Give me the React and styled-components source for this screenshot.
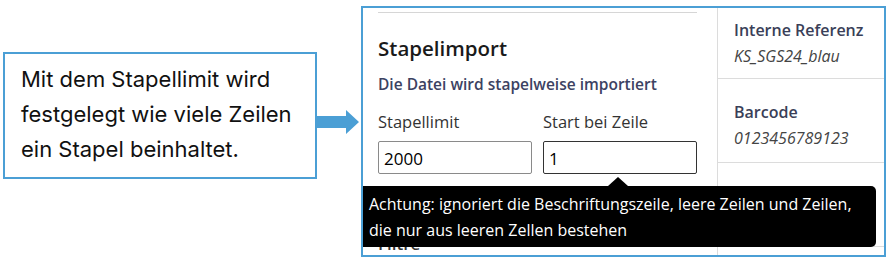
import React from "react"
import styled, { createGlobalStyle } from "styled-components"

const Global = createGlobalStyle`
  html, body {
    margin: 0;
    padding: 0;
    background: #fff;
  }
  body {
    font-family: "Open Sans", "Noto Sans", sans-serif;
  }
`

const accent = "#4b9fd5"

const Page = styled.div`
  display: flex;
  align-items: flex-start;
  width: 889px;
  height: 261px;
  padding: 6px 0 0 3px;
  box-sizing: border-box;
`

const Callout = styled.div`
  margin-top: 46px;
  width: 314px;
  height: 127px;
  box-sizing: border-box;
  border: 2px solid ${accent};
  padding: 8px 0 0 16px;
  font-family: "Inter", "Lato", sans-serif;
  font-size: 22px;
  line-height: 35px;
  color: #111;
  white-space: nowrap;
`

const Arrow = styled.svg`
  margin-top: 104px;
  flex-shrink: 0;
`

const Panel = styled.div`
  position: relative;
  margin-left: 2px;
  width: 525px;
  height: 251px;
  box-sizing: border-box;
  border: 2px solid ${accent};
  overflow: hidden;
  display: grid;
  grid-template-columns: 355px 1fr;
`

const Main = styled.div`
  padding: 4px 20px 0 15px;
  border-right: 1px solid #dcdcdc;
`

const Rule = styled.hr`
  margin: 0;
  border: 0;
  border-top: 1px solid #d6d6d6;
`

const Title = styled.h2`
  margin: 21px 0 0;
  font-size: 20.5px;
  font-weight: 600;
  line-height: 28px;
  color: #1a1a1a;
`

const Subtitle = styled.p`
  margin: 11px 0 0;
  font-size: 15.5px;
  font-weight: 600;
  line-height: 22px;
  color: #3c4262;
`

const Fields = styled.div`
  display: grid;
  grid-template-columns: 154px 154px;
  column-gap: 11px;
  margin-top: 16px;
`

const Field = styled.label`
  display: flex;
  flex-direction: column;
  gap: 8px;
`

const Label = styled.span`
  font-size: 16.5px;
  line-height: 22px;
  color: #333;
`

const Input = styled.input`
  box-sizing: border-box;
  width: 154px;
  height: 33px;
  padding: 2px 5px 0;
  border: 1px solid ${p => (p.$focused ? "#333" : "#8a8a8a")};
  border-radius: 2px;
  font-family: "Open Sans", sans-serif;
  font-size: 17px;
  color: #000;
  outline: none;
`

const Hidden = styled.h3`
  margin: 58px 0 0;
  font-size: 17px;
  font-weight: 600;
  color: #333;
`

const Side = styled.div`
  display: flex;
  flex-direction: column;
`

const Cell = styled.div`
  padding: ${p => p.$top}px 16px 0;
  height: ${p => p.$height}px;
  border-bottom: 1px solid #dcdcdc;
`

const CellTitle = styled.div`
  font-size: 16px;
  font-weight: 600;
  line-height: 26px;
  color: #3a3f58;
`

const CellValue = styled.div`
  font-size: 16px;
  font-style: italic;
  line-height: 26px;
  color: #444;
`

const Tooltip = styled.div`
  position: absolute;
  left: 0;
  top: 178px;
  width: 513px;
  height: 61px;
  box-sizing: border-box;
  background: #000;
  border-radius: 0 5px 5px 0;
  padding: 5px 0 0 6px;
  color: #fff;
  font-size: 16px;
  line-height: 26px;
  white-space: nowrap;
  &::before {
    content: "";
    position: absolute;
    left: 245px;
    top: -9px;
    border: 10px solid transparent;
    border-top: 0;
    border-bottom: 9px solid #000;
  }
`

export default function App() {
  return (
    <>
      <Global />
      <Page>
        <Callout>
          Mit dem Stapellimit wird
          <br />
          festgelegt wie viele Zeilen
          <br />
          ein Stapel beinhaltet.
        </Callout>
        <Arrow width="42" height="24" viewBox="0 0 42 24">
          <path d="M0 6 H29 V0 L42 12 L29 24 V18 H0 Z" fill={accent} />
        </Arrow>
        <Panel>
          <Main>
            <Rule />
            <Title>Stapelimport</Title>
            <Subtitle>Die Datei wird stapelweise importiert</Subtitle>
            <Fields>
              <Field>
                <Label>Stapellimit</Label>
                <Input defaultValue="2000" />
              </Field>
              <Field>
                <Label>Start bei Zeile</Label>
                <Input defaultValue="1" $focused />
              </Field>
            </Fields>
            <Hidden>Filtre</Hidden>
          </Main>
          <Side>
            <Cell $top={9} $height={61}>
              <CellTitle>Interne Referenz</CellTitle>
              <CellValue>KS_SGS24_blau</CellValue>
            </Cell>
            <Cell $top={20} $height={63}>
              <CellTitle>Barcode</CellTitle>
              <CellValue>0123456789123</CellValue>
            </Cell>
            <Cell $top={18} $height={65} />
          </Side>
          <Tooltip>
            Achtung: ignoriert die Beschriftungszeile, leere Zeilen und Zeilen,
            <br />
            die nur aus leeren Zellen bestehen
          </Tooltip>
        </Panel>
      </Page>
    </>
  )
}
